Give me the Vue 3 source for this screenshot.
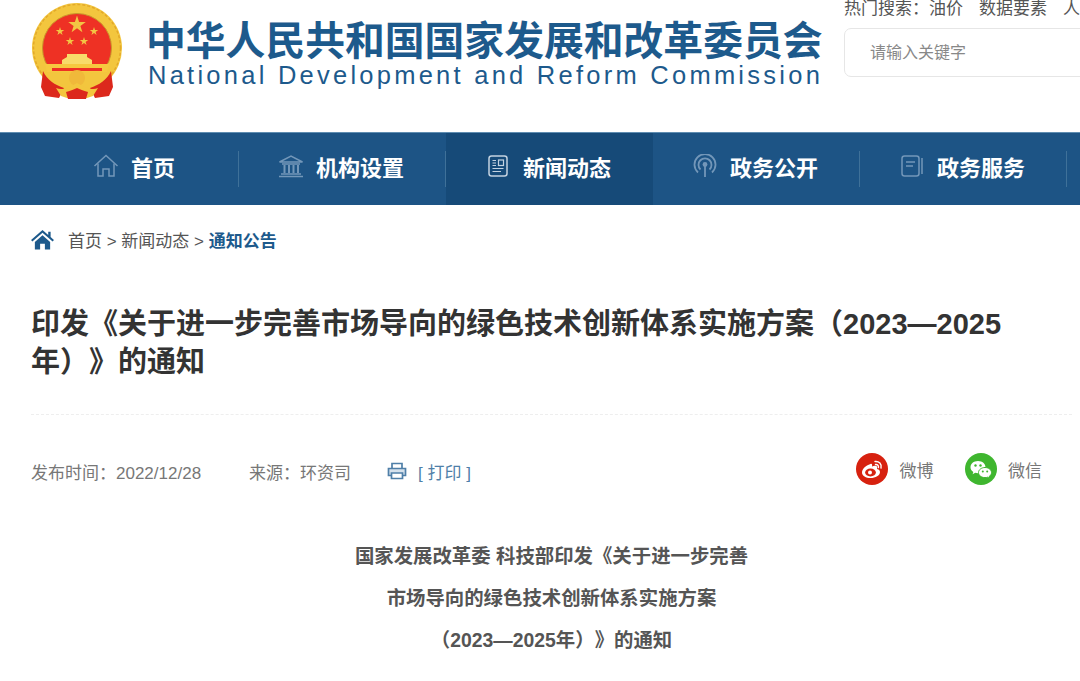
<template>
  <div class="page">
    <header class="top">
      <div class="brand">
        <svg class="emblem" viewBox="0 0 92 100" width="92" height="100">
          <circle cx="46" cy="45" r="45" fill="#f3c63e" />
          <circle cx="46" cy="45" r="43.5" fill="none" stroke="#e3a92a" stroke-width="1.5" stroke-dasharray="3 2" />
          <circle cx="46" cy="45" r="34.5" fill="#ee3124" stroke="#c9962a" stroke-width="1" />
          <polygon points="46,12.5 48.1,18.9 54.8,18.9 49.4,22.9 51.4,29.3 46,25.3 40.6,29.3 42.6,22.9 37.2,18.9 43.9,18.9" fill="#f2c544" />
          <polygon points="29,24 30,27 33.2,27 30.6,28.9 31.6,32 29,30.1 26.4,32 27.4,28.9 24.8,27 28,27" fill="#f2c544" />
          <polygon points="63,24 64,27 67.2,27 64.6,28.9 65.6,32 63,30.1 60.4,32 61.4,28.9 58.8,27 62,27" fill="#f2c544" />
          <polygon points="39,34 40,37 43.2,37 40.6,38.9 41.6,42 39,40.1 36.4,42 37.4,38.9 34.8,37 38,37" fill="#f2c544" />
          <polygon points="53,34 54,37 57.2,37 54.6,38.9 55.6,42 53,40.1 50.4,42 51.4,38.9 48.8,37 52,37" fill="#f2c544" />
          <path d="M36 51 H56 V54 L61 57 V61 H31 V57 L36 54 Z" fill="#f8dc6a" />
          <path d="M14 61 H78 L76 69 H16 Z" fill="#f6c93f" />
          <path d="M21 65 H71 V68 H21 Z" fill="#ee3124" />
          <path d="M16 69 H76 C72 76 66 80 58 82 H34 C26 80 20 76 16 69 Z" fill="#f3c63e" />
          <path d="M12 68 C16 77 24 82 33 85 L28 95 L14 93 L10 84 Z" fill="#dc281c" />
          <path d="M80 68 C76 77 68 82 59 85 L64 95 L78 93 L82 84 Z" fill="#dc281c" />
          <circle cx="46" cy="75" r="8" fill="#f0b93a" />
          <path d="M25 85 C32 88 38 84 46 80 C54 84 60 88 67 85 L62 93 L56 95 H36 L30 93 Z" fill="#f3c63e" />
          <path d="M35 89 C40 88 43 86 46 85 C49 86 52 88 57 89 L55 96 H37 Z" fill="#dc281c" />
        </svg>
        <div class="brand-text">
          <div class="brand-cn">中华人民共和国国家发展和改革委员会</div>
          <div class="brand-en">National Development and Reform Commission</div>
        </div>
      </div>
      <div class="search-col">
        <div class="hot">
          <span>热门搜索：</span><span class="hot-item">油价</span><span class="hot-item">数据要素</span><span>人</span>
        </div>
        <div class="search-box">请输入关键字</div>
      </div>
    </header>

    <nav class="nav">
      <a v-for="item in navItems" :key="item.label" class="nav-item" :class="{ active: item.active }">
        <svg class="nav-icon" viewBox="0 0 26 24" width="26" height="24" fill="none" stroke="#7397b9" stroke-width="1.5">
          <g v-if="item.icon === 'home'">
            <path d="M1.5 12 L13 1.5 L24.5 12" />
            <path d="M5 9.5 V22 H10 V15 H16 V22 H21 V9.5" />
          </g>
          <g v-else-if="item.icon === 'bank'">
            <path d="M1.5 8 L13 2 L24.5 8 Z" />
            <path d="M1 22.5 H25 M3 20 H23 M4 10 H22" />
            <path d="M6.5 11 V19 M11 11 V19 M15.5 11 V19 M20 11 V19" stroke-width="2" />
          </g>
          <g v-else-if="item.icon === 'news'" stroke="#c3d2e0">
            <rect x="4" y="2" width="18" height="20" rx="2.5" />
            <path d="M7.5 6.5 H11 M7.5 9 H11 M7.5 11.5 H11 M7.5 14.5 H18.5 M7.5 17.5 H16" stroke-width="1.2" />
            <rect x="13.5" y="6" width="5" height="5.5" stroke-width="1.2" />
          </g>
          <g v-else-if="item.icon === 'signal'" stroke-width="1.8">
            <path d="M6 18.5 A10.5 10.5 0 1 1 20 18.5" />
            <path d="M8.5 15.5 A6.5 6.5 0 1 1 17.5 15.5" />
            <circle cx="13" cy="10.5" r="2.4" fill="#7397b9" stroke="none" />
            <path d="M13 12 V23" />
          </g>
          <g v-else>
            <rect x="3" y="2" width="17" height="20" rx="2.5" />
            <path d="M7 8 H16 M7 12 H14" />
            <path d="M23 4 V20" />
          </g>
        </svg>
        <span>{{ item.label }}</span>
      </a>
    </nav>

    <main class="content">
      <div class="crumbs">
        <svg viewBox="0 0 24 22" width="23" height="21" class="crumb-icon">
          <path d="M12 1 L18 6.2 V3 H20.5 V8.4 L24 11.5 L22.6 13 L12 4 L1.4 13 L0 11.5 Z" fill="#1d5a8c" />
          <path d="M4 13.5 L12 6.5 L20 13.5 V21.5 H14.5 V15.5 H9.5 V21.5 H4 Z" fill="#1d5a8c" />
        </svg>
        <span>首页 &gt; 新闻动态 &gt; <b>通知公告</b></span>
      </div>

      <h1 class="title">印发《关于进一步完善市场导向的绿色技术创新体系实施方案（2023—2025年）》的通知</h1>

      <div class="meta">
        <div class="meta-left">
          <span class="date">发布时间：2022/12/28</span>
          <span class="source">来源：环资司</span>
          <span class="print">
            <svg viewBox="0 0 20 18" width="20" height="18" fill="none" stroke="#4f7fa8" stroke-width="1.7">
              <path d="M5 6 V1.5 H15 V6" />
              <path d="M4.5 13.5 H1.5 V6.5 H18.5 V13.5 H15.5" fill="#d5e1ec" />
              <path d="M4.5 11 H15.5 V16.5 H4.5 Z" fill="#fff" />
            </svg>
            <span>[ 打印 ]</span>
          </span>
        </div>
        <div class="share">
          <span class="share-item">
            <svg viewBox="0 0 32 32" width="32" height="32">
              <circle cx="16" cy="16" r="16" fill="#d7210f" />
              <path d="M14.5 11 C9.5 12.5 6 16 6 19.5 C6 23 10 25 14.5 25 C19.5 25 24 22.5 24 19 C24 17 22 16.2 21 16 C21.8 14 21 12.5 18.5 12.8 C17 13 16 13.6 16 13.6 C16.4 11.5 16 10.5 14.5 11 Z" fill="#fff" />
              <ellipse cx="14.5" cy="19.5" rx="5.4" ry="3.9" fill="#d7210f" />
              <circle cx="14" cy="19.5" r="2" fill="#fff" />
              <path d="M19 8.5 C23 8 26 11 25 15 M19.5 11.5 C21.5 11.2 22.8 12.5 22.4 14.5" fill="none" stroke="#fff" stroke-width="1.4" stroke-linecap="round" />
            </svg>
            <span>微博</span>
          </span>
          <span class="share-item">
            <svg viewBox="0 0 32 32" width="32" height="32">
              <circle cx="16" cy="16" r="16" fill="#3fb62f" />
              <path d="M13 8 C8.6 8 5.5 10.8 5.5 14.2 C5.5 16.2 6.6 17.8 8.3 18.9 L7.6 21.2 L10.2 19.8 C11.2 20.1 12 20.2 13 20.2 C17.4 20.2 20.5 17.5 20.5 14.2 C20.5 10.8 17.4 8 13 8 Z" fill="#fff" />
              <path d="M20 14.5 C23.6 14.5 26.5 16.8 26.5 19.6 C26.5 21.2 25.6 22.5 24.2 23.5 L24.8 25.4 L22.6 24.2 C21.8 24.5 21 24.6 20 24.6 C16.4 24.6 13.5 22.4 13.5 19.6 C13.5 16.8 16.4 14.5 20 14.5 Z" fill="#fff" stroke="#3fb62f" stroke-width="1" />
              <circle cx="10.5" cy="12.5" r="1.2" fill="#3fb62f" />
              <circle cx="15.5" cy="12.5" r="1.2" fill="#3fb62f" />
              <circle cx="17.8" cy="18.5" r="1" fill="#3fb62f" />
              <circle cx="22.2" cy="18.5" r="1" fill="#3fb62f" />
            </svg>
            <span>微信</span>
          </span>
        </div>
      </div>

      <div class="doc-title">
        <p>国家发展改革委 科技部印发《关于进一步完善</p>
        <p>市场导向的绿色技术创新体系实施方案</p>
        <p>（2023—2025年）》的通知</p>
      </div>
    </main>
  </div>
</template>

<script setup>
const navItems = [
  { label: '首页', icon: 'home' },
  { label: '机构设置', icon: 'bank' },
  { label: '新闻动态', icon: 'news', active: true },
  { label: '政务公开', icon: 'signal' },
  { label: '政务服务', icon: 'book' },
];
</script>

<style>
html,
body {
  margin: 0;
  background: #fff;
  overflow: hidden;
}
</style>

<style scoped>
.page {
  width: 1080px;
  height: 681px;
  overflow: hidden;
  font-family: "Liberation Sans", "Noto Sans CJK SC", sans-serif;
  color: #666;
  text-spacing-trim: space-all;
}

.top {
  display: flex;
  justify-content: space-between;
  height: 132px;
  padding-left: 31px;
}

.brand {
  display: flex;
  align-items: flex-start;
}

.emblem {
  display: block;
  flex: none;
  margin-top: 3px;
}

.brand-text {
  margin: 19px 0 0 23px;
  color: #1d5a8c;
  white-space: nowrap;
}

.brand-cn {
  font-size: 39.8px;
  font-weight: 700;
  line-height: 44px;
}

.brand-en {
  font-size: 25.5px;
  line-height: 30px;
  letter-spacing: 3.25px;
  margin: -3px 0 0 2px;
}

.search-col {
  width: 236px;
  flex: none;
  overflow: hidden;
}

.hot {
  height: 28px;
  font-size: 17px;
  line-height: 17px;
  white-space: nowrap;
  color: #555;
}

.hot-item {
  margin-right: 16px;
}

.search-box {
  box-sizing: border-box;
  width: 300px;
  height: 49px;
  padding-left: 25px;
  border: 1px solid #e6e6e6;
  border-radius: 7px;
  font-size: 16px;
  line-height: 47px;
  color: #888;
}

.nav {
  display: flex;
  height: 73px;
  padding-left: 32px;
  background: #1d5485;
  border-top: 1px solid #5f8db1;
  box-sizing: border-box;
}

.nav-item {
  position: relative;
  flex: none;
  display: flex;
  align-items: center;
  justify-content: center;
  gap: 12px;
  width: 207px;
  padding: 0 3px 6px 0;
  box-sizing: border-box;
  color: #fff;
  font-size: 22px;
  font-weight: 700;
}

.nav-item::after {
  content: "";
  position: absolute;
  right: 0;
  top: 18px;
  height: 36px;
  width: 1px;
  background: #3f7199;
}

.nav-item.active {
  background: #164a78;
}

.nav-item.active::after {
  display: none;
}

.nav-icon {
  flex: none;
}

.content {
  padding: 0 8px 0 31px;
}

.crumbs {
  display: flex;
  align-items: center;
  gap: 14px;
  height: 69px;
  font-size: 17px;
  color: #555;
}

.crumbs b {
  color: #1d5a8c;
}

.crumb-icon {
  flex: none;
}

.title {
  margin: 31px 0 0;
  width: 985px;
  font-size: 29px;
  line-height: 38px;
  font-weight: 700;
  color: #333;
}

.meta {
  display: flex;
  justify-content: space-between;
  align-items: center;
  margin-top: 33px;
  padding-top: 33px;
  border-top: 1px dashed #eee;
  height: 42px;
  font-size: 17px;
  color: #777;
}

.meta-left {
  display: flex;
  align-items: center;
  padding-top: 4px;
}

.date {
  width: 218px;
}

.source {
  width: 138px;
}

.print {
  display: flex;
  align-items: center;
  gap: 11px;
  color: #4f7fa8;
}

.share {
  display: flex;
  gap: 31px;
  padding-right: 30px;
}

.share-item {
  display: flex;
  align-items: center;
  gap: 11.5px;
}

.doc-title {
  width: 1041px;
  margin-top: 45px;
  text-align: center;
  font-size: 19.4px;
  font-weight: 700;
  color: #555;
}

.doc-title p {
  margin: 0;
  line-height: 42px;
}
</style>
